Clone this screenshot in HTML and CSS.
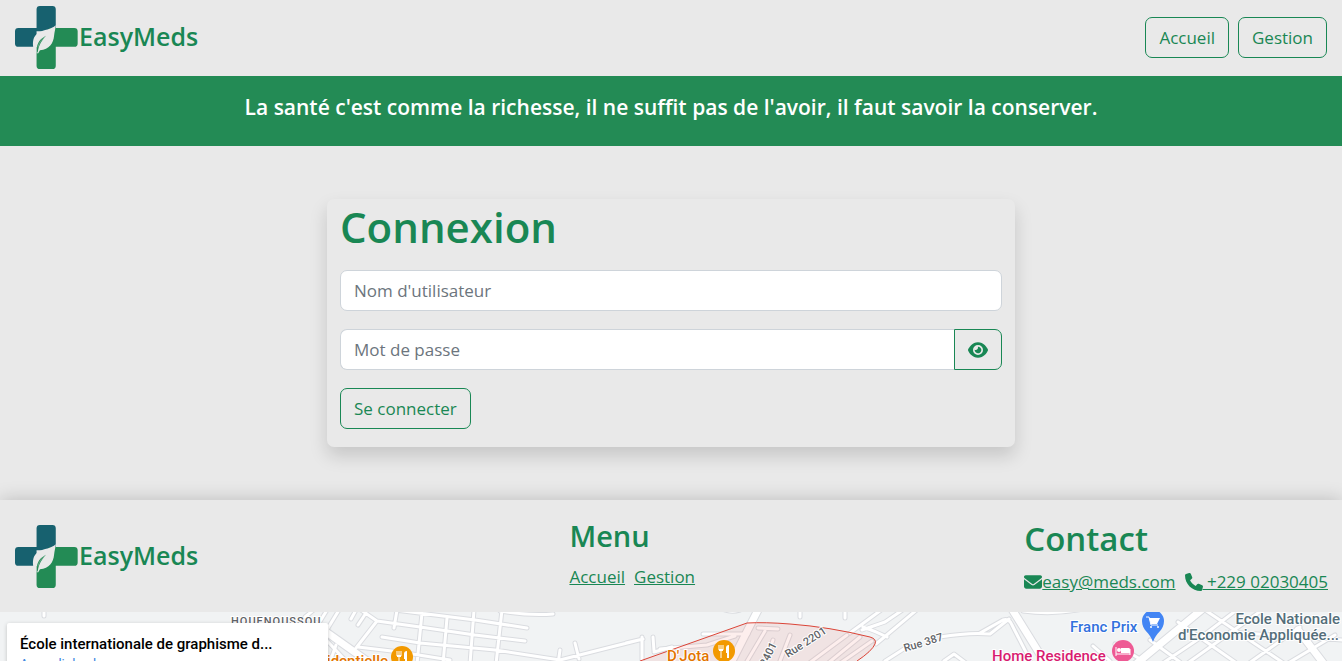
FILE: index.html
```html
<!DOCTYPE html>
<html lang="fr">
<head>
<meta charset="utf-8">
<meta name="viewport" content="width=device-width, initial-scale=1">
<title>EasyMeds</title>
<link rel="stylesheet" href="styles.css">
</head>
<body>
<svg class="sprite" aria-hidden="true">
  <symbol id="logo" viewBox="47 17 187 187">
    <path class="logo-teal" d="M121 17H158Q168 17 168 27V92H111V138H57Q47 138 47 128V92Q47 82 57 82H111V27Q111 17 121 17Z"/>
    <path class="logo-green" d="M150 82H223Q233 82 233 92V128Q233 138 223 138H168V194Q168 204 158 204H121Q111 204 111 194V130Z"/>
    <path class="logo-leaf" d="M168 74C154 87 134 86 116 97C101 106 99 122 101 139H111V157H116L121 148C149 146 161 127 163 105C164 94 167 86 168 74Z"/>
    <path class="logo-green" d="M112 142C113 126 122 114 139 105C127 119 118 131 115 152L112 157Z"/>
    <path class="logo-vein" d="M115 140C118 126 126 115 137 108"/>
  </symbol>
</svg>

<header class="topbar">
  <a class="brand" href="#"><svg class="brand-logo" aria-hidden="true"><use href="#logo"/></svg><span class="brand-name">EasyMeds</span></a>
  <nav class="topnav" aria-label="Navigation principale">
    <a class="btn" href="#">Accueil</a>
    <a class="btn" href="#">Gestion</a>
  </nav>
</header>

<p class="banner">La santé c'est comme la richesse, il ne suffit pas de l'avoir, il faut savoir la conserver.</p>

<main class="main">
  <form class="card">
    <h1 class="card-title">Connexion</h1>
    <input class="field" type="text" placeholder="Nom d'utilisateur" aria-label="Nom d'utilisateur">
    <div class="group">
      <input class="field" type="password" placeholder="Mot de passe" aria-label="Mot de passe">
      <button class="btn btn-eye" type="button" aria-label="Afficher le mot de passe">
        <svg class="eye" viewBox="0 0 576 512" aria-hidden="true"><path d="M288 32c-80.800 0-145.500 36.800-192.600 80.600C48.600 156 17.300 208 2.500 243.700c-3.300 7.900-3.300 16.700 0 24.600C17.300 304 48.600 356 95.400 399.400C142.500 443.200 207.200 480 288 480s145.500-36.800 192.600-80.600c46.800-43.500 78.100-95.400 93-131.100c3.300-7.900 3.300-16.700 0-24.600c-14.900-35.700-46.200-87.700-93-131.100C433.500 68.800 368.800 32 288 32zM144 256a144 144 0 1 1 288 0 144 144 0 1 1 -288 0zm144-64c0 35.300-28.700 64-64 64c-7.100 0-13.900-1.200-20.300-3.300c-5.500-1.800-11.900 1.600-11.700 7.400c.3 6.900 1.300 13.800 3.200 20.700c13.700 51.200 66.400 81.600 117.600 67.900s81.600-66.400 67.900-117.600c-11.100-41.500-47.800-69.400-88.600-71.100c-5.800-.2-9.200 6.100-7.400 11.700c2.100 6.400 3.300 13.200 3.300 20.300z"/></svg>
      </button>
    </div>
    <button class="btn" type="submit">Se connecter</button>
  </form>
</main>

<footer class="footer">
  <a class="brand" href="#"><svg class="brand-logo" aria-hidden="true"><use href="#logo"/></svg><span class="brand-name">EasyMeds</span></a>
  <div class="menu">
    <h3 class="menu-title">Menu</h3>
    <nav class="links" aria-label="Pied de page">
      <a href="#">Accueil</a>
      <a href="#">Gestion</a>
    </nav>
  </div>
  <div class="contact">
    <h2 class="contact-title">Contact</h2>
    <div class="links">
      <a class="icon-link" href="mailto:easy@meds.com"><svg class="icon" viewBox="0 0 512 512" aria-hidden="true"><path d="M48 64C21.500 64 0 85.500 0 112c0 15.100 7.100 29.300 19.200 38.400L236.800 313.600c11.400 8.500 27 8.500 38.400 0L492.800 150.400c12.100-9.100 19.200-23.300 19.200-38.400c0-26.500-21.500-48-48-48H48zM0 176V384c0 35.300 28.700 64 64 64H448c35.300 0 64-28.700 64-64V176L294.400 339.200c-22.800 17.100-54 17.100-76.800 0L0 176z"/></svg>easy@meds.com</a>
      <a class="icon-link" href="tel:+22902030405"><svg class="icon" viewBox="0 0 512 512" aria-hidden="true"><path d="M164.900 24.600c-7.700-18.600-28-28.500-47.400-23.200l-88 24C12.100 30.200 0 46 0 64C0 311.400 200.600 512 448 512c18 0 33.800-12.100 38.600-29.500l24-88c5.300-19.400-4.600-39.700-23.200-47.400l-96-40c-16.300-6.800-35.200-2.100-46.300 11.600L304.700 368C234.300 334.700 177.300 277.700 144 207.300L193.300 167c13.700-11.200 18.400-30 11.600-46.300l-40-96z"/></svg> +229 02030405</a>
    </div>
  </div>
</footer>

<section class="map" aria-label="Carte">
  <svg class="map-canvas">
    <defs>
      <g id="roads">
        <path d="M339 610L325 633M356 610L351 619M366 613L358 625M361 610L377 621L420 627L475 635L525 641M397 610L394 628M377 621L356 648M395 610L475 620L527 628M382 637L420 643L495 650L560 660L643 639M358 647L400 652L450 660M422 613L417 664M447 618L443 664M474 610L470 664M502 610L496 664M500 611Q530 616 553 614M560 650L558 664M575 643L579 659M642 637V661M653 637L654 651M626 643L643 639M654 652L672 647M336 645L330 662"/>
        <path d="M44 610V616M720 608Q730 613 740 610M800 610V617M845 610V618M703 634L748 634M660 649L707 645L735 636M758 628L778 629M790 635L780 661M765 631L746 663M773 640L765 663M847 635L808 664M860 637L827 664M872 641L839 664"/>
        <path d="M850 633L888 605M863 627Q875 631 887 637M876 644L919 608M862 630L885 622L904 609M885 661L910 645M940 637Q970 632 990 634L1009 619M980 633L1003 620Q1009 618 1012 625L1031 662M944 661L954 654L966 663M1023 611Q1060 616 1095 606M1110 661L1093 646M1115 644L1145 662M1178 622L1235 662M1205 610L1285 664M1238 609L1200 638L1160 665M1265 608L1185 665M1300 627L1245 666M1335 635L1285 665M1230 632L1342 640M1150 640L1180 662"/>
        <path d="M305 617L316 608M315 628L345 660M327 610L316 628"/>
      </g>
      <g id="avenues">
        <path d="M315 624L370 663M759 608L732 661M1010 606L1046 664M1205 607L1136 664M1298 630L1324 664"/>
      </g>
    </defs>
    <g transform="translate(0 -612)">
      <use class="road-edge" href="#roads"/>
      <use class="avenue-edge" href="#avenues"/>
      <use class="road" href="#roads"/>
      <use class="avenue" href="#avenues"/>
      <path class="zone" d="M640 661L747 623Q765 622 790 624Q830 627 870 637Q877 639 875 644Q872 651 857 661"/>
      <text class="label town" x="231" y="625">HOUENOUSSOU</text>
      <text class="label street" transform="translate(788 658) rotate(-33)">Rue 2201</text>
      <text class="label street" transform="translate(766 667) rotate(-64)">2401</text>
      <text class="label street" transform="translate(905 652) rotate(-17)">Rue 387</text>
      <text class="label food" x="388" y="666" text-anchor="end">Résidentielle</text>
      <text class="label food" x="667" y="661">D'Jota</text>
      <text class="label shop" x="1070" y="632">Franc Prix</text>
      <text class="label hotel" x="992" y="661">Home Residence</text>
      <text class="label school" x="1340" y="624" text-anchor="end">Ecole Nationale</text>
      <text class="label school" x="1339" y="640" text-anchor="end">d'Economie Appliquée...</text>
      <g id="food-pin">
        <circle class="pin-food" cx="724" cy="651" r="11"/>
        <path class="pin-line" d="M719 645V650M721 645V650M723 645V650M721 649V658"/>
        <path class="pin-fill" d="M726 648Q726 645 729 645V658H727V653H726ZM719 649H723V651H719Z"/>
      </g>
      <use href="#food-pin" x="-322" y="6"/>
      <path class="pin-shop" d="M1142 621A11 11 0 0 1 1164 621C1164 631 1156 632 1153 642C1150 632 1142 631 1142 621Z"/>
      <path class="pin-line" d="M1146 617H1149L1151 625H1158"/>
      <path class="pin-fill" d="M1149 618H1160L1157 624H1151Z"/>
      <circle class="pin-fill" cx="1151" cy="627" r="1"/><circle class="pin-fill" cx="1158" cy="627" r="1"/>
      <circle class="pin-hotel" cx="1123" cy="651" r="11"/>
      <path class="pin-line" d="M1116 647V656M1116 654H1130M1130 655V649"/>
      <path class="pin-fill" d="M1121 648H1129Q1130 648 1130 650V653H1121Z"/><circle class="pin-fill" cx="1119" cy="650" r="2"/>
    </g>
  </svg>
  <div class="place">
    <div class="place-name">École internationale de graphisme d...</div>
    <a class="place-link" href="#">Agrandir le plan</a>
  </div>
</section>
</body>
</html>
```
FILE: styles.css
```css
:root {
  --green: #198754;
  --banner: #238b55;
  --surface: #e9e9e9;
}

* { box-sizing: border-box; }

body {
  margin: 0;
  height: 100vh;
  display: flex;
  flex-direction: column;
  overflow: hidden;
  background: var(--surface);
  color: var(--green);
  font-family: "Open Sans", "Noto Sans", sans-serif;
  font-size: 17px;
  line-height: 27px;
}

h1, h2, h3, p { margin: 0; font-weight: 600; }

a { color: inherit; }

.sprite { position: absolute; width: 0; height: 0; }

.logo-teal { fill: #17616f; }
.logo-green { fill: #238b55; }
.logo-leaf { fill: #e9e9e9; }
.logo-vein { fill: none; stroke: #e9e9e9; stroke-width: 1; }

.topbar {
  display: flex;
  flex-shrink: 0;
  justify-content: space-between;
  align-items: center;
  padding: 6px 15px 7px;
}

.brand {
  display: flex;
  align-items: center;
  gap: 1px;
  font-size: 25px;
  line-height: 36px;
  font-weight: 600;
  text-decoration: none;
}

.brand-logo { width: 63px; height: 63px; }

.brand-name { padding-bottom: 3px; }

.topnav { display: flex; gap: 9px; }

.btn {
  padding: 6px 13px;
  border: 1px solid var(--green);
  border-radius: 7px;
  background: transparent;
  color: var(--green);
  font: inherit;
  text-decoration: none;
}

.banner {
  flex-shrink: 0;
  padding: 16px 15px 24px;
  background: var(--banner);
  color: #fff;
  font-size: 21px;
  line-height: 30px;
  text-align: center;
}

.main {
  flex-shrink: 0;
  display: flex;
  justify-content: center;
  padding: 53px 15px;
}

.card {
  display: flex;
  flex-direction: column;
  align-items: flex-start;
  gap: 18px;
  width: 100%;
  max-width: 688px;
  padding: 3px 13px 18px;
  border-radius: 7px;
  background: var(--surface);
  box-shadow: 0 9px 18px rgba(0, 0, 0, 0.15);
}

.card-title {
  font-size: 42px;
  line-height: 50px;
}

.field {
  width: 100%;
  height: 41px;
  padding: 6px 13px;
  border: 1px solid #ced4da;
  border-radius: 7px;
  background: #fff;
  color: #212529;
  font: inherit;
}

.field::placeholder { color: #6c757d; opacity: 1; }

.group { display: flex; width: 100%; }

.group .field {
  flex: 1;
  border-right: 0;
  border-radius: 7px 0 0 7px;
}

.btn-eye {
  display: flex;
  align-items: center;
  border-radius: 0 7px 7px 0;
}

.eye { width: 20px; height: 18px; fill: currentColor; }

.footer {
  flex-shrink: 0;
  display: flex;
  justify-content: space-between;
  align-items: center;
  padding: 16px 14px 16px 15px;
  box-shadow: 0 0 18px rgba(0, 0, 0, 0.2);
}

.menu { padding: 0 0 4px 42px; }

.menu-title {
  margin-bottom: 9px;
  font-size: 29px;
  line-height: 36px;
}

.contact { padding-bottom: 1px; }

.contact-title {
  margin-bottom: 6px;
  font-size: 33px;
  line-height: 46px;
}

.links { display: flex; gap: 9px; }

.icon-link { white-space: nowrap; }

.icon {
  width: 18px;
  height: 18px;
  fill: currentColor;
  vertical-align: -3px;
}

.map {
  position: relative;
  flex: 1;
  min-height: 49px;
  overflow: hidden;
  background: #f1f3f4;
  font-family: Roboto, sans-serif;
}

.map-canvas { display: block; width: 100%; height: 100%; }

.road, .road-edge, .avenue, .avenue-edge { fill: none; stroke-linecap: round; stroke-linejoin: round; }
.road-edge { stroke: #dadce0; stroke-width: 5; }
.road { stroke: #fff; stroke-width: 3; }
.avenue-edge { stroke: #dadce0; stroke-width: 9; }
.avenue { stroke: #fff; stroke-width: 7; }
.zone { fill: rgba(234, 67, 53, 0.09); stroke: #db4437; stroke-width: 1; }

.label {
  font-size: 15px;
  font-weight: 500;
  paint-order: stroke;
  stroke: #fff;
  stroke-width: 2px;
}

.town { fill: #5f6368; font-size: 11px; letter-spacing: 1px; }
.street { fill: #5f6368; font-size: 11px; }
.food { fill: #e37400; }
.shop { fill: #3271dd; }
.hotel { fill: #d81b70; }
.school { fill: #546e7a; }

.pin-food { fill: #f29900; }
.pin-shop { fill: #4285f4; }
.pin-hotel { fill: #ee5a94; }
.pin-fill { fill: #fff; }
.pin-line { fill: none; stroke: #fff; stroke-width: 1; }

.place {
  position: absolute;
  top: 11px;
  left: 7px;
  width: 321px;
  padding: 11px 13px;
  border-radius: 2px;
  background: #fff;
  box-shadow: 0 1px 4px rgba(0, 0, 0, 0.2);
  color: #000;
}

.place-name { font-size: 15px; line-height: 20px; font-weight: 500; }

.place-link {
  display: block;
  color: #3a84df;
  font-size: 13px;
  line-height: 20px;
  text-decoration: none;
}
```
